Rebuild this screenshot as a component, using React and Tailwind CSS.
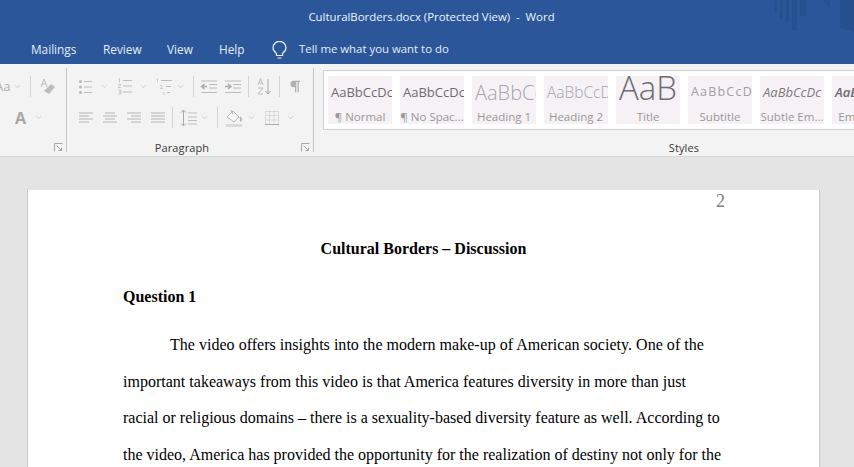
import React from "react";
import { ChevronDown } from "lucide-react";

const uiFont = "font-['Open_Sans','Noto_Sans',sans-serif]";

const Chev = () => <ChevronDown size={9} strokeWidth={1.5} className="text-[#b5b5b5] shrink-0" />;

const Sep = () => <div className="w-px h-[21px] bg-[#d4d4d4] shrink-0" />;

const Bulb = () => (
  <svg width="15" height="18" viewBox="0 0 15 18" fill="none" stroke="#e6ecf5" strokeWidth="1.200" className="shrink-0 mr-[12px]">
    <path d="M4.500 12.500C2.500 11 1 9 1 6.800a6.500 6.500 0 0 1 13 0c0 2.200-1.500 4.200-3.500 5.700V14.500h-6zM5.500 17h4" />
  </svg>
);

// small launcher in the corner of a ribbon group
const Launcher = () => (
  <svg width="9" height="9" viewBox="0 0 9 9" fill="none" stroke="#a8a8a8" strokeWidth="1">
    <path d="M.5 8.500v-8h8M2.500 2.500l5 5M7.500 4.500v3h-3" />
  </svg>
);

const Lines = ({ align }) => {
  const rows = align === "center" ? ["M3 3h10", "M1 6h14", "M3 9h10", "M1 12h14"]
    : align === "right" ? ["M1 3h14", "M5 6h10", "M1 9h14", "M5 12h10"]
    : align === "justify" ? ["M1 3h14", "M1 6h14", "M1 9h14", "M1 12h14"]
    : ["M1 3h14", "M1 6h10", "M1 9h14", "M1 12h10"];
  return (
    <svg width="16" height="15" viewBox="0 0 16 15" stroke="#b4b4b4" strokeWidth="1" fill="none">
      {rows.map((d) => <path key={d} d={d} />)}
    </svg>
  );
};

const Bullets = () => (
  <svg width="16" height="16" viewBox="0 0 16 16" fill="none">
    <g fill="#b8b8b8"><circle cx="2.500" cy="2.500" r="1.500" /><circle cx="2.500" cy="8" r="1.500" /><circle cx="2.500" cy="13.500" r="1.500" /></g>
    <path d="M6 2.500h8M6 8h8M6 13.500h8" stroke="#bdbdbd" />
  </svg>
);

const Numbers = () => (
  <svg width="16" height="17" viewBox="0 0 16 17" fill="none">
    <path d="M1.500 1.500l1-1v4M1 6.500h3l-3 3h3M1 12h3v2H2h2v2H1" stroke="#c2c2c2" strokeWidth=".8" />
    <path d="M6 2.500h9M6 8h9M6 14h9" stroke="#bdbdbd" />
  </svg>
);

const Multilevel = () => (
  <svg width="18" height="17" viewBox="0 0 18 17" fill="none">
    <path d="M1.500 1.500l1-1v4M5 8l1.500-.5 1 1-2 2h2.500M9 14v3" stroke="#c2c2c2" strokeWidth=".8" />
    <path d="M6 2.500h11M11 8.500h5M12 14.500h3" stroke="#bdbdbd" />
  </svg>
);

const Indent = ({ flip }) => (
  <svg width="17" height="14" viewBox="0 0 17 14" fill="none">
    <path d="M1 1h16M9 4.500h8M9 8h8M1 12.500h16" stroke="#bcbcbc" />
    <path d={flip ? "M1 6.500h5M4 4l3 2.500L4 9" : "M7 6.500H2M4.500 4l-3 2.500 3 2.500"} stroke="#a9a9a9" strokeWidth="1.400" />
  </svg>
);

const Sort = () => (
  <svg width="14" height="17" viewBox="0 0 14 17" fill="none">
    <path d="M3.500.500L1 7M3.500.500L6 7M2 5h3M1 10h5l-5 6h5" stroke="#bdbdbd" />
    <path d="M11 1v15M8.500 13l2.500 3 2.500-3" stroke="#a8a8a8" />
  </svg>
);

const Pilcrow = () => (
  <svg width="10" height="13" viewBox="0 0 12 14">
    <path d="M4.500 0H12v1.500h-1.500V14H9V1.500H7.500V14H6V8H4.500a4 4 0 0 1 0-8z" fill="#b0b0b0" />
  </svg>
);

const LineSpacing = () => (
  <svg width="17" height="18" viewBox="0 0 17 18" fill="none">
    <path d="M3.500 1v16M1 3.500L3.500 1 6 3.500M1 14.500L3.500 17 6 14.500" stroke="#a9a9a9" />
    <path d="M8 4h9M8 8h9M8 11.500h9M8 15h9" stroke="#bdbdbd" />
  </svg>
);

const Shading = () => (
  <svg width="17" height="18" viewBox="0 0 17 18" fill="none">
    <path d="M1 8l6-6 6 6-5 5z" stroke="#b8b8b8" fill="#f8f8f8" />
    <path d="M5 1l2 4" stroke="#b0b0b0" />
    <path d="M14 8c1.500 2 1.500 3.500 0 4" stroke="#b8b8b8" strokeWidth="2" />
    <path d="M0 16.500h16" stroke="#dcdcdc" strokeWidth="3" />
  </svg>
);

const Borders = () => (
  <svg width="14" height="14" viewBox="0 0 14 14" fill="none">
    <path d="M.500.500h13M.500 4.500h13M.500 9h13M.500.500v13M4.500.500v13M9 .500v13M13.500.500v13" stroke="#c4c4c4" strokeDasharray="1 1" />
    <path d="M0 13.500h14" stroke="#adadad" />
  </svg>
);

const Eraser = () => (
  <svg width="16" height="17" viewBox="0 0 16 17" fill="none">
    <path d="M1 9L4 1l3 8M2 6h4" stroke="#bdbdbd" />
    <path d="M4 13l7-7 4 3-6 7z" fill="#bcbcbc" />
  </svg>
);

const StyleCard = ({ sample, label, sampleClass }) => (
  <div className="w-[64px] h-12 bg-[#f5f1f5] shrink-0 flex flex-col items-center overflow-hidden">
    <div className={`h-[33px] shrink-0 w-full px-[3px] flex items-center overflow-hidden whitespace-nowrap ${sampleClass}`}>{sample}</div>
    <div className="text-[11.500px] leading-[15px] text-[#999999] whitespace-nowrap">{label}</div>
  </div>
);

const styles = [
  { sample: "AaBbCcDc", label: "¶ Normal", sampleClass: "text-[13px] text-[#6e6a70]" },
  { sample: "AaBbCcDc", label: "¶ No Spac...", sampleClass: "text-[13px] text-[#6e6a70]" },
  { sample: "AaBbCc", label: "Heading 1", sampleClass: "text-[20px] font-light text-[#a5a5ad]" },
  { sample: "AaBbCcD", label: "Heading 2", sampleClass: "text-[15.500px] font-light text-[#a5a5ad]" },
  { sample: "AaB", label: "Title", sampleClass: "text-[33px] font-light text-[#6f6c72] leading-[28px] pb-[9px]" },
  { sample: "AaBbCcD", label: "Subtitle", sampleClass: "text-[12.500px] tracking-[1.200px] text-[#a0a0a6]" },
  { sample: "AaBbCcDc", label: "Subtle Em...", sampleClass: "text-[13px] italic text-[#7d7a80]" },
  { sample: "AaBbCcDc", label: "Emphasis", sampleClass: "text-[13px] italic font-semibold text-[#6e6a70]" },
];

const Tab = ({ children, className = "" }) => <span className={`text-[11.800px] text-[#e6ecf5] ${className}`}>{children}</span>;

export default function App() {
  return (
    <div className={`w-[854px] h-[467px] overflow-hidden bg-[#e4e4e4] flex flex-col ${uiFont}`}>
      {/* title bar */}
      <div className="relative h-[64px] shrink-0 bg-[#2b579a] overflow-hidden">
        <div className="h-[33px] pl-[9px] flex items-center justify-center text-[11.400px] text-[#f0f4fa]">
          CulturalBorders.docx (Protected View)&nbsp; -&nbsp; Word
        </div>
        {/* faint decoration top right */}
        <svg className="absolute right-0 top-0" width="80" height="34" viewBox="0 0 80 34" fill="#27508e">
          <path d="M0 0h3v13H0zM6 0h3v19H6zM12 0h3v23h-3zM18 0h5v31h-5zM26 0h6v16h-6zM48 0l8 0 0 8zM66 0h14v32l-11-3-3-1z" />
        </svg>
        <div className="h-[31px] pt-[2px] flex items-center -ml-[6px]">
          <Tab className="w-[37px]">s</Tab>
          <Tab className="w-[72px]">Mailings</Tab>
          <Tab className="w-[64px]">Review</Tab>
          <Tab className="w-[52px]">View</Tab>
          <Tab className="w-[53px]">Help</Tab>
          <Bulb />
          <span className="text-[11.400px] text-[#e6ecf5] -mt-[2px]">Tell me what you want to do</span>
        </div>
      </div>

      {/* ribbon */}
      <div className="h-[93px] shrink-0 bg-[#f3f3f3] border-b border-[#d6d6d6] flex">
        {/* font group, cut off at the left */}
        <div className="w-[67px] shrink-0 border-r border-[#c6c6c6] my-[4px] flex flex-col relative">
          <div className="h-[29px] shrink-0 mt-[4px] flex items-center -ml-[5px]">
            <span className="text-[13px] text-[#b0b0b0]">Aa</span>
            <div className="ml-[3px] mr-[8px]"><Chev /></div>
            <Sep />
            <div className="ml-[9px]"><Eraser /></div>
          </div>
          <div className="h-[29px] shrink-0 mt-[2px] flex items-center gap-[8px] pl-[15px]">
            <span className="text-[16px] font-bold text-[#a8a8a8]">A</span>
            <Chev />
          </div>
          <div className="absolute right-[3px] bottom-0"><Launcher /></div>
        </div>

        {/* paragraph group */}
        <div className="w-[247px] shrink-0 border-r border-[#c6c6c6] my-[4px] flex flex-col relative">
          <div className="h-[29px] shrink-0 mt-[4px] flex items-center pl-[11px]">
            <Bullets />
            <div className="ml-[6px]"><Chev /></div>
            <div className="ml-[8px]"><Numbers /></div>
            <div className="ml-[6px]"><Chev /></div>
            <div className="ml-[7px]"><Multilevel /></div>
            <div className="ml-[3px] mr-[8px]"><Chev /></div>
            <Sep />
            <div className="ml-[6px]"><Indent /></div>
            <div className="ml-[7px] mr-[7px]"><Indent flip /></div>
            <Sep />
            <div className="ml-[8px] mr-[8px]"><Sort /></div>
            <Sep />
            <div className="ml-[10px]"><Pilcrow /></div>
          </div>
          <div className="h-[29px] shrink-0 mt-[2px] flex items-center pl-[11px]">
            <Lines />
            <div className="ml-[8px]"><Lines align="center" /></div>
            <div className="ml-[8px]"><Lines align="right" /></div>
            <div className="ml-[8px] mr-[6px]"><Lines align="justify" /></div>
            <Sep />
            <div className="ml-[7px]"><LineSpacing /></div>
            <div className="ml-[3px] mr-[8px]"><Chev /></div>
            <Sep />
            <div className="ml-[8px]"><Shading /></div>
            <div className="ml-[4px]"><Chev /></div>
            <div className="ml-[9px]"><Borders /></div>
            <div className="ml-[7px]"><Chev /></div>
          </div>
          <div className="h-[10px] mt-[11px] shrink-0 flex items-center justify-center text-[11px] tracking-[.1px] text-[#3a3a3a] pr-[16px]">Paragraph</div>
          <div className="absolute right-[3px] bottom-0"><Launcher /></div>
        </div>

        {/* styles group */}
        <div className="flex-1 min-w-0 flex flex-col pl-[9px]">
          <div className="h-[60px] mt-[6px] shrink-0 bg-white border border-[#d0d0d0] border-r-0 flex gap-[8px] pl-[4px] pt-[5px] overflow-hidden">
            {styles.map((s) => <StyleCard key={s.label} {...s} />)}
          </div>
          <div className="h-[12px] mt-[12px] shrink-0 flex items-center justify-center text-[11px] tracking-[.1px] text-[#3a3a3a] pl-[191px]">Styles</div>
        </div>
      </div>

      {/* document */}
      <div className="flex-1 min-h-0 pt-[33px] pl-[27px] overflow-hidden">
        <div className="relative w-[793px] h-[400px] bg-white border-x border-[#c8c8c8] px-[95px] font-['Liberation_Serif',serif] text-[16px] text-black">
          <div className="absolute right-[94px] top-[-2px] text-[#808080] text-[18px]">2</div>
          <p className="pt-[47px] h-[71px] leading-[24px] text-center font-bold">Cultural Borders – Discussion</p>
          <p className="mt-[24px] leading-[24px] font-bold">Question 1</p>
          <div className="mt-[18px] leading-[36.500px] whitespace-nowrap">
            <p className="indent-[47px] tracking-[.025px]">The video offers insights into the modern make-up of American society. One of the</p>
            <p className="tracking-[.01px]">important takeaways from this video is that America features diversity in more than just</p>
            <p>racial or religious domains – there is a sexuality-based diversity feature as well. According to</p>
            <p>the video, America has provided the opportunity for the realization of destiny not only for the</p>
          </div>
        </div>
      </div>
    </div>
  );
}
